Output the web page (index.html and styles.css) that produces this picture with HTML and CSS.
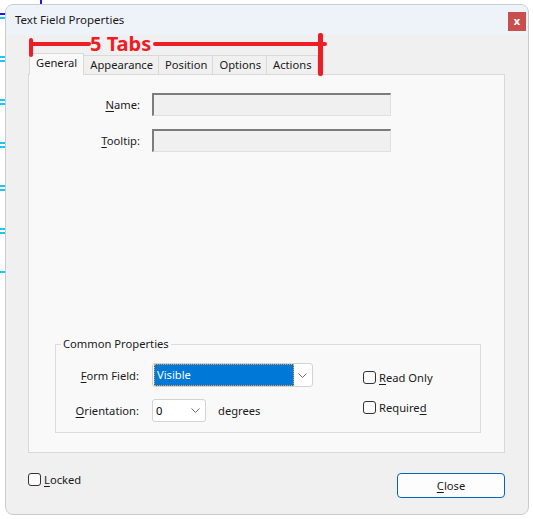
FILE: index.html
```html
<!DOCTYPE html>
<html>
<head>
<meta charset="utf-8">
<title>Text Field Properties</title>
<link rel="stylesheet" href="styles.css">
</head>
<body>
<div class="marks">
  <span class="vmark"></span>
  <span class="mark dark m1"></span>
  <span class="mark m1b"></span>
  <span class="mark m2"></span>
  <span class="mark m3"></span>
  <span class="mark m4"></span>
  <span class="mark m5"></span>
  <span class="mark m6"></span>
  <span class="mark m7"></span>
  <span class="mark m8"></span>
  <span class="mark m9"></span>
  <span class="mark m10"></span>
  <span class="mark m11"></span>
  <span class="mark m12"></span>
</div>
<div class="window">
  <div class="titlebar">
    <span class="title">Text Field Properties</span>
    <span class="close-x">x</span>
  </div>
  <div class="content">
    <div class="annot">
      <span class="a-vl"></span>
      <span class="a-hl1"></span>
      <span class="a-text">5 Tabs</span>
      <span class="a-hl2"></span>
      <span class="a-vr"></span>
    </div>
    <div class="tabs">
      <div class="tab active">General</div>
      <div class="tab">Appearance</div>
      <div class="tab">Position</div>
      <div class="tab">Options</div>
      <div class="tab">Actions</div>
    </div>
    <div class="panel">
      <div class="fields">
        <span class="lbl"><u>N</u>ame:</span>
        <span class="field"></span>
        <span class="lbl"><u>T</u>ooltip:</span>
        <span class="field"></span>
      </div>
      <fieldset class="group">
        <legend>Common Properties</legend>
        <div class="group-body">
          <div class="gform">
            <span class="lbl"><u>F</u>orm Field:</span>
            <div class="select wide">
              <span class="hl">Visible</span>
              <svg class="chev" width="9" height="5" viewBox="0 0 9 5"><polyline points="0.5,0.5 4.5,4.5 8.5,0.5" fill="none" stroke="#6a6a6a" stroke-width="1"/></svg>
            </div>
            <span class="lbl"><u>O</u>rientation:</span>
            <div class="orient">
              <div class="select narrow">
                <span class="val">0</span>
                <svg class="chev" width="9" height="5" viewBox="0 0 9 5"><polyline points="0.5,0.5 4.5,4.5 8.5,0.5" fill="none" stroke="#6a6a6a" stroke-width="1"/></svg>
              </div>
              <span class="deg">degrees</span>
            </div>
          </div>
          <div class="checks">
            <label class="check"><span class="box"></span><span><u>R</u>ead Only</span></label>
            <label class="check"><span class="box"></span><span>Require<u>d</u></span></label>
          </div>
        </div>
      </fieldset>
    </div>
    <div class="footer">
      <label class="check locked"><span class="box"></span><span><u>L</u>ocked</span></label>
      <button class="btn"><u>C</u>lose</button>
    </div>
  </div>
</div>
</body>
</html>
```
FILE: styles.css
```css
* { box-sizing: border-box; }
html, body { margin: 0; }
body {
  background: #fff;
  width: 533px;
  height: 519px;
  overflow: hidden;
  position: relative;
  padding: 4px 0 0 5px;
  font-family: "Noto Sans", "DejaVu Sans", sans-serif;
  font-size: 11.2px;
  color: #000;
}
u { text-decoration: underline; text-underline-offset: 2px; text-decoration-thickness: 1px; }

/* background decoration left of the window */
.marks { position: absolute; left: 0; top: 0; width: 45px; height: 300px; }
.mark { position: absolute; left: 0; width: 5px; height: 2px; background: #1fc6f2; }
.mark.dark { background: #1a1af0; }
.m1 { top: 13px; }
.m1b { top: 17px; }
.m2 { top: 56px; }
.m3 { top: 60px; }
.m4 { top: 99px; }
.m5 { top: 103px; }
.m6 { top: 142px; }
.m7 { top: 146px; }
.m8 { top: 185px; }
.m9 { top: 189px; }
.m10 { top: 228px; }
.m11 { top: 232px; }
.m12 { top: 271px; }
.vmark { position: absolute; left: 40px; top: 0; width: 2px; height: 4px; background: #1a1af0; }

.window {
  position: relative;
  width: 524px;
  height: 511px;
  border: 1px solid #cbcbcb;
  border-radius: 8px;
  background: #f0f0f0;
  overflow: hidden;
  display: flex;
  flex-direction: column;
}
.titlebar {
  height: 30px;
  flex: none;
  background: #eef2f9;
  display: flex;
  align-items: flex-start;
  padding-left: 9px;
}
.title { line-height: 30px; color: #1a1a1a; font-size: 11.5px; }
.close-x {
  margin-left: auto;
  margin-top: 7px;
  margin-right: 2px;
  width: 18px;
  height: 19px;
  background: #c94f4f;
  color: #fff;
  font-weight: bold;
  font-size: 11px;
  line-height: 17px;
  text-align: center;
}

.content { position: relative; flex: 1; padding: 18px 0 0 22px; }

/* red annotation overlay */
.annot { position: absolute; left: 0; top: 0; width: 0; height: 0; z-index: 5; }
.a-vl, .a-hl1, .a-hl2, .a-vr { position: absolute; background: #ee1d25; border-radius: 2px; }
.a-vl { left: 23px; top: 3px; width: 4px; height: 19px; }
.a-hl1 { left: 23px; top: 7px; width: 62px; height: 4px; }
.a-hl2 { left: 147px; top: 7px; width: 174px; height: 4px; }
.a-vr { left: 312px; top: -2px; width: 5px; height: 43px; }
.a-text {
  position: absolute;
  left: 84px;
  top: -1px;
  font-size: 20px;
  line-height: 20px;
  font-weight: bold;
  color: #ee1d25;
  white-space: nowrap;
}

.tabs {
  position: relative;
  z-index: 1;
  display: flex;
  align-items: flex-end;
  height: 21px;
  margin-left: 1px;
}
.tab {
  height: 19px;
  line-height: 18px;
  padding: 0 5px 0 6px;
  border: 1px solid #d9d9d9;
  border-bottom: none;
  margin-left: -1px;
  background: #f0f0f0;
  color: #1a1a1a;
}
.tab.active {
  margin-left: 0;
  height: 22px;
  margin-bottom: -1px;
  padding: 0 6px 3px;
  background: #f9f9f9;
}

.panel {
  width: 477px;
  height: 379px;
  border: 1px solid #d9d9d9;
  background: #f9f9f9;
  padding-top: 18px;
  display: flex;
  flex-direction: column;
}
.fields {
  display: grid;
  grid-template-columns: 111px 239px;
  column-gap: 12px;
  row-gap: 13px;
  align-items: center;
}
.lbl { text-align: right; color: #1a1a1a; }
.field {
  height: 23px;
  background: #f0f0f0;
  border: 1px solid #e0e0e0;
  border-top: 2px solid #7c7c7c;
  border-left: 2px solid #7c7c7c;
}

.group {
  margin: auto 0 19px 26px;
  width: 426px;
  border: 1px solid #dcdcdc;
  padding: 11px 0 10px 0;
  min-width: 0;
}
.group legend {
  margin-left: 5px;
  padding: 0 2px;
  line-height: 16px;
  color: #1a1a1a;
}
.group-body { display: flex; align-items: flex-start; }
.gform {
  display: grid;
  grid-template-columns: 83px 161px;
  column-gap: 13px;
  row-gap: 12px;
  align-items: center;
}
.select {
  height: 24px;
  border: 1px solid #d3d3d3;
  border-radius: 3px;
  background: #fff;
  display: flex;
  align-items: center;
}
.select.wide { width: 161px; }
.select.narrow { width: 54px; height: 23px; }
.hl {
  margin-left: 1px;
  width: 140px;
  height: 22px;
  background: #0078d7;
  color: #fff;
  outline: 1px dotted #e8a040;
  outline-offset: -1px;
  padding-left: 3px;
  line-height: 21px;
}
.val { padding-left: 3px; }
.chev { margin-left: auto; margin-right: 5px; flex: none; }
.orient { display: flex; align-items: center; }
.deg { margin-left: 12px; color: #1a1a1a; }

.checks {
  margin-left: 50px;
  padding-top: 6px;
  display: flex;
  flex-direction: column;
  gap: 13px;
}
.check { display: flex; align-items: center; height: 17px; line-height: 17px; color: #1a1a1a; }
.box {
  width: 13px;
  height: 13px;
  border: 1px solid #333;
  border-radius: 3px;
  background: #fbfbfb;
  margin-right: 3px;
  flex: none;
}

.footer {
  width: 477px;
  margin-top: 20px;
  display: flex;
  justify-content: space-between;
  align-items: flex-start;
}
.locked { margin-top: -2px; }
.btn {
  width: 108px;
  height: 25px;
  border: 1px solid #0067c0;
  border-radius: 4px;
  background: #fdfdfd;
  font: inherit;
  color: #1a1a1a;
  padding: 0;
}
```
